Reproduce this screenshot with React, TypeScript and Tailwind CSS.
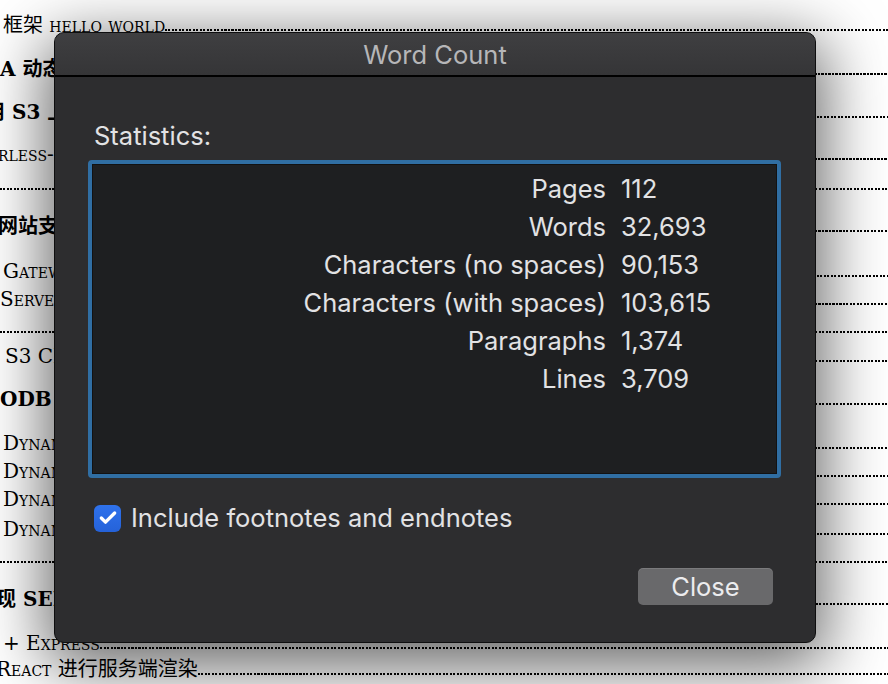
import { Check } from "lucide-react";

type DocRow = {
  h: string;
  text?: string;
  bold?: boolean;
  caps?: boolean;
  shift?: string;
};

// table of contents behind the dialog
const docRows: DocRow[] = [
  { h: "h-[35px]", text: "框架 hello world", caps: true, shift: "ml-[3px]" },
  { h: "h-[44px]", text: "A 动态路由与页面渲染", bold: true },
  { h: "h-[43px]", text: "用 S3 上传与静态托管", bold: true, shift: "-ml-[15px]" },
  { h: "h-[42px]", text: "rless-framework 部署", caps: true, shift: "-ml-[2px]" },
  { h: "h-[30px]" },
  { h: "h-[42px]", text: "网站支持自定义域名", bold: true, shift: "-ml-[2px]" },
  { h: "h-[45px]", text: "Gateway 配置", caps: true, shift: "ml-[3px]" },
  { h: "h-[28px]", text: "Serverless 插件", caps: true },
  { h: "h-[28px]" },
  { h: "h-[29px]", text: "S3 CRUD 操作", shift: "ml-[5px]" },
  { h: "h-[43px]", text: "ODB 数据库", bold: true },
  { h: "h-[44px]", text: "DynamoDB 创建表", caps: true, shift: "ml-[3px]" },
  { h: "h-[28px]", text: "DynamoDB 写入数据", caps: true, shift: "ml-[3px]" },
  { h: "h-[28px]", text: "DynamoDB 查询数据", caps: true, shift: "ml-[3px]" },
  { h: "h-[30px]", text: "DynamoDB 删除数据", caps: true, shift: "ml-[3px]" },
  { h: "h-[28px]" },
  { h: "h-[42px]", text: "现 SERVERLESS 应用", bold: true, shift: "-ml-[4px]" },
  { h: "h-[44px]", text: "+ Express", caps: true, shift: "ml-[3px]" },
  { h: "h-[26px]", text: "React 进行服务端渲染", caps: true, shift: "-ml-[4px]" },
];

const stats = [
  ["Pages", "112"],
  ["Words", "32,693"],
  ["Characters (no spaces)", "90,153"],
  ["Characters (with spaces)", "103,615"],
  ["Paragraphs", "1,374"],
  ["Lines", "3,709"],
];

function DocBackground() {
  return (
    <div className="flex flex-col font-['DejaVu_Serif','Noto_Sans_CJK_SC',serif] text-[20px] text-black">
      {docRows.map((row, i) => (
        <div key={i} className={`flex items-end ${row.h}`}>
          {row.text && (
            <span
              className={`whitespace-nowrap leading-[20px] ${row.shift ?? ""} ${
                row.bold ? "font-bold" : ""
              } ${row.caps ? "[font-variant-caps:small-caps]" : ""}`}
            >
              {row.text}
            </span>
          )}
          <div className="mb-[4px] h-[2px] flex-1 bg-[repeating-linear-gradient(90deg,#000_0_2px,transparent_2px_3.5px)]" />
        </div>
      ))}
    </div>
  );
}

export default function App() {
  return (
    <div className="relative h-[684px] w-[888px] overflow-hidden bg-white">
      <DocBackground />

      <div className="absolute left-[54px] top-[32px] flex h-[611px] w-[762px] flex-col overflow-hidden rounded-[10px] border border-[#0e0e0f] bg-[#2d2d2f] font-['Inter',sans-serif] text-[25.5px] text-[#e2e2e4] shadow-[0_16px_64px_8px_rgba(0,0,0,0.6)]">
        <div className="flex h-[44px] items-center justify-center border-b-2 border-black bg-linear-to-b from-[#3f3f41] to-[#353537] pt-[3px] text-[#b6b6b8]">
          Word Count
        </div>

        <div className="flex flex-1 flex-col px-[39px] pb-[37px]">
          <div className="pt-[45px] leading-[28px]">Statistics:</div>

          <div className="-ml-[6px] mt-[10px] h-[318px] w-[693px] rounded-[4px] border-[4px] border-[#306ea3]">
            <div className="h-full border border-[#121213] bg-[#1e1f21] pt-[5px]">
              <div className="grid grid-cols-[513px_1fr] gap-x-[15px]">
                {stats.map(([label, value]) => (
                  <div key={label} className="contents">
                    <div className="text-right leading-[38px]">{label}</div>
                    <div className="leading-[38px]">{value}</div>
                  </div>
                ))}
              </div>
            </div>
          </div>

          <div className="mt-[26px] flex items-center gap-[10px]">
            <div className="flex size-[27px] items-center justify-center rounded-[6px] bg-linear-to-b from-[#2f72ec] to-[#2562d9]">
              <Check className="size-[20px] text-white" strokeWidth={4} />
            </div>
            <span className="leading-[28px]">Include footnotes and endnotes</span>
          </div>

          <div className="mt-auto flex justify-end pr-[3px]">
            <button className="h-[37px] w-[135px] rounded-[5px] bg-[#69696b] text-[#ececee] shadow-[inset_0_1px_0_rgba(255,255,255,0.12)]">
              Close
            </button>
          </div>
        </div>
      </div>
    </div>
  );
}
